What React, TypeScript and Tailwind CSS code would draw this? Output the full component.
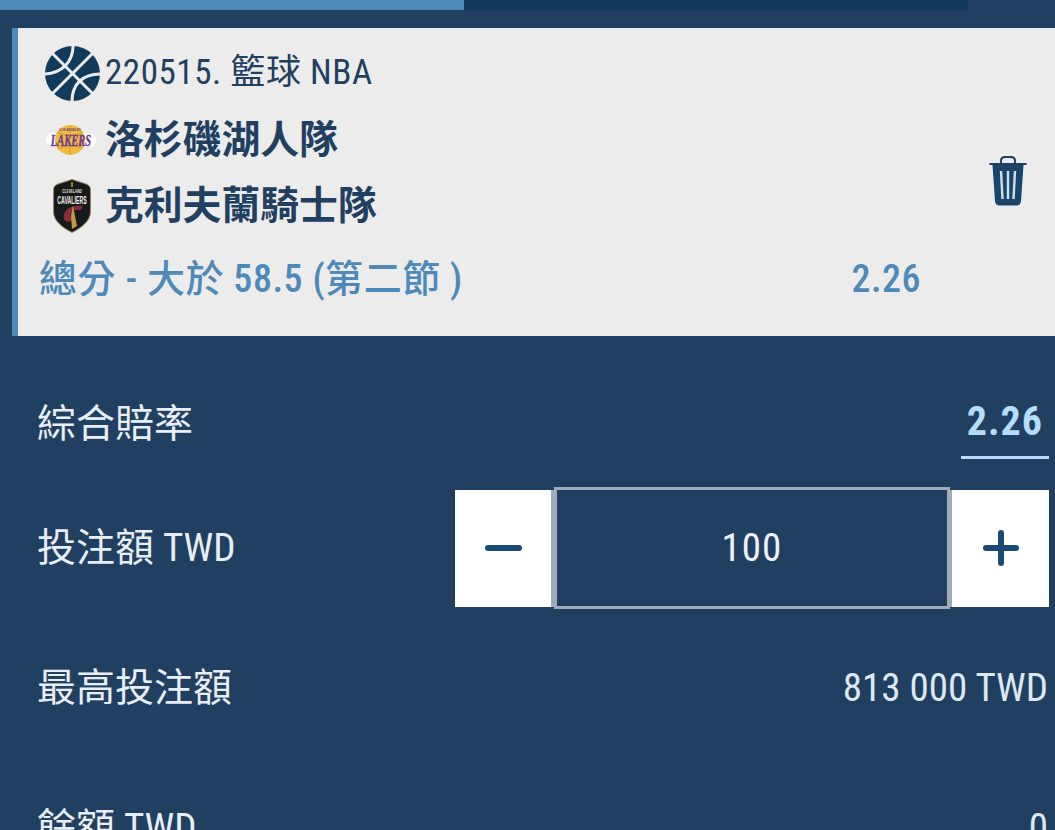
const font = { fontFamily: '"Roboto","Noto Sans CJK TC",sans-serif' };

function Ball() {
  return (
    <svg width="55" height="55" viewBox="0 0 55 55" className="shrink-0">
      <circle cx="27.5" cy="27.5" r="27.5" fill="#123a5a" />
      <g fill="none" stroke="#ececec" strokeWidth="3">
        <path d="M7 7 L48 48" />
        <path d="M48 7 L7 48" />
        <path d="M28 0 C28 16 17 27 0 28" />
        <path d="M55 28 C38 28 27 38 27 55" />
      </g>
    </svg>
  );
}

function Lakers() {
  return (
    <svg width="50" height="34" viewBox="0 0 50 34" className="shrink-0">
      <rect x="0" y="10" width="50" height="14" rx="7" fill="#ffffff" />
      <circle cx="24" cy="17" r="15" fill="#f3bb3c" />
      <path d="M24 2 V32 M11 9 C18 13 30 13 37 9 M11 26 C18 22 30 22 37 26" stroke="#c9932b" strokeWidth="0.7" fill="none" />
      <text transform="translate(24 7.5)" textAnchor="middle" fontSize="3" fill="#5d3a86" fontWeight="700" fontFamily="Liberation Sans">LOS ANGELES</text>
      <text transform="translate(25 23) scale(1 1.55)" textAnchor="middle" fontSize="10.5" fontStyle="italic" fontWeight="700" fill="#6a3a94" stroke="#6a3a94" strokeWidth="0.25" fontFamily="Liberation Serif">LAKERS</text>
    </svg>
  );
}

function Cavs() {
  return (
    <svg width="38" height="54" viewBox="0 0 38 54" className="shrink-0">
      <path d="M19 0.5 L33 5 C36 6 37.5 8 37.5 11 V33 C37.5 42 28 49 19 53.5 C10 49 0.5 42 0.5 33 V11 C0.5 8 2 6 5 5 Z" fill="#171a1b" stroke="#9a8258" strokeWidth="1" />
      <text transform="translate(19 14) scale(1 1.4)" textAnchor="middle" fontSize="3.2" fill="#e8e2d4" fontWeight="700" fontFamily="Liberation Sans">CLEVELAND</text>
      <text transform="translate(19 25) scale(1 2)" textAnchor="middle" fontSize="5.2" fill="#f0ece2" fontWeight="700" fontFamily="Liberation Sans">CAVALIERS</text>
      <path d="M29 27 C17 25 9 32 11 40 C13 44 18 43 21 40 C17 39 16 35 19 32 C22 30 26 32 29 30 Z" fill="#8a2c3a" />
      <path d="M20 27 L24 47 L19 50 L18 36 Z" fill="#c29a45" />
      <path d="M19 3 V8" stroke="#c29a45" strokeWidth="1.5" />
    </svg>
  );
}

function Trash() {
  return (
    <svg width="38" height="52" viewBox="0 0 38 52">
      <path d="M12 9 V6 C12 3.5 13.5 2 16 2 H22 C24.5 2 26 3.5 26 6 V9" fill="none" stroke="#213f60" strokeWidth="2" />
      <rect x="0.5" y="8" width="37" height="2" fill="#213f60" />
      <path d="M3.5 10 H34.5 L32 46 C31.8 49 30 50.5 27 50.5 H11 C8 50.5 6.2 49 6 46 Z" fill="#1b4469" />
      <path d="M12 16 L13.5 44 M19 16 V44 M26 16 L24.5 44" stroke="#cfe0ee" strokeWidth="2.4" fill="none" />
    </svg>
  );
}

function Row({ label, value }: { label: string; value: string }) {
  return (
    <div className="flex items-center justify-between h-[140px] pl-[37px] pr-[7px]">
      <span className="text-[39px] leading-none text-[#e8eef3] font-stretch-[80%]">{label}</span>
      <span className="text-[39px] leading-none text-[#dfe8f0] font-stretch-[80%]">{value}</span>
    </div>
  );
}

export default function App() {
  return (
    <div className="w-[1055px] h-[830px] overflow-hidden bg-[#213f60]" style={font}>
      <div className="flex w-[968px] h-[10px] bg-[#123a5a]">
        <div className="w-[464px] bg-[#4d8ab9]" />
      </div>

      <div className="mt-[18px] ml-[12px] h-[308px] flex bg-[#ececec] border-l-[6px] border-[#4d8ab9]">
        <div className="flex-1 pl-[21px] pt-[18px]">
          <div className="flex items-center gap-[5px] h-[55px] pl-[6px]">
            <Ball />
            <span className="text-[35px] leading-none text-[#213f60] font-stretch-[80%] tracking-[0.55px] mb-[3px]">220515. 籃球 NBA</span>
          </div>
          <div className="flex items-center gap-[9px] h-[50px] mt-[14px] pl-[7px]">
            <Lakers />
            <span className="text-[38.8px] font-bold leading-none text-[#213f60]">洛杉磯湖人隊</span>
          </div>
          <div className="flex items-center gap-[14px] h-[56px] mt-[13px] pl-[14px]">
            <Cavs />
            <span className="text-[38.8px] font-bold leading-none text-[#213f60]">克利夫蘭騎士隊</span>
          </div>
          <div className="flex items-center justify-between h-[40px] mt-[25px] w-[882px]">
            <span className="text-[38px] font-medium leading-none text-[#4d8ab9] font-stretch-[80%] tracking-[0.55px]">總分 - 大於 58.5 (第二節 )</span>
            <span className="text-[38px] font-medium leading-none text-[#4d8ab9] font-stretch-[80%] tracking-[0.5px]">2.26</span>
          </div>
        </div>
        <div className="flex items-center pr-[28px] pb-[2px]">
          <Trash />
        </div>
      </div>

      <div className="flex items-start justify-between h-[152px] pl-[37px] pr-[6px] pt-[65px]">
        <span className="text-[39px] leading-[46px] text-[#e8eef3]">綜合賠率</span>
        <span className="w-[88px] h-[58px] text-right pr-[6px] border-b-[3px] border-[#b5dcfb] text-[40px] leading-[42px] font-bold text-[#b5dcfb] font-stretch-[80%] tracking-[1px]">2.26</span>
      </div>

      <div className="flex items-center justify-between h-[120px] pl-[37px] pr-[6px]">
        <span className="text-[39px] leading-none text-[#e8eef3] font-stretch-[80%]">投注額 TWD</span>
        <div className="flex items-center">
          <button className="w-[99px] h-[117px] flex items-center justify-center bg-white border-r-[3px] border-[#9fadb9]">
            <span className="block w-[37px] h-[6px] rounded-full bg-[#1b4a75]" />
          </button>
          <div className="w-[396px] h-[122px] flex items-center justify-center border-[3px] border-[#9fadb9] bg-[#213f60] text-[39px] text-[#eef2f5] font-stretch-[80%] tracking-[1px]">100</div>
          <button className="relative w-[99px] h-[117px] flex items-center justify-center bg-white border-l-[2px] border-[#9fadb9]">
            <span className="block w-[36px] h-[6px] rounded-full bg-[#1b4a75]" />
            <span className="absolute block w-[6px] h-[36px] rounded-full bg-[#1b4a75]" />
          </button>
        </div>
      </div>

      <div className="mt-[10px]">
        <Row label="最高投注額" value="813 000 TWD" />
        <Row label="餘額 TWD" value="0" />
      </div>
    </div>
  );
}
